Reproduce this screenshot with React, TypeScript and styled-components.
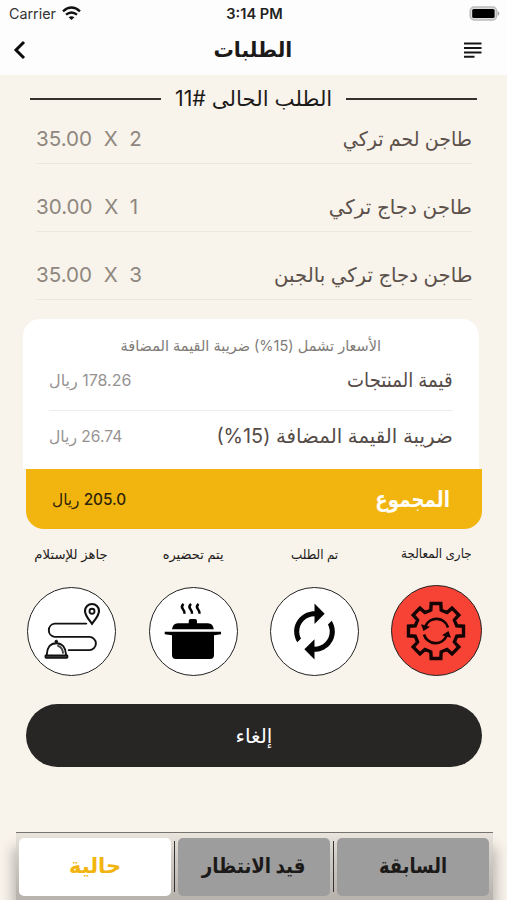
import React from "react";
import styled, { createGlobalStyle } from "styled-components";

const Global = createGlobalStyle`
  *{box-sizing:border-box}
  body{margin:0;background:#f8f3eb}
`;
const Page = styled.div`
  width:507px;height:900px;overflow:hidden;display:flex;flex-direction:column;
  background:#f8f3eb;color:#111;font-family:Inter,"DejaVu Sans",sans-serif;
`;
const Top = styled.header`height:75px;background:#fefdfd;flex:none;`;
const Status = styled.div`
  height:27px;display:grid;grid-template-columns:1fr auto 1fr;align-items:center;
  padding:0 7px 0 9px;font-size:14.3px;
`;
const Carrier = styled.div`display:flex;align-items:center;gap:6px;color:#333;`;
const Clock = styled.div`font-weight:600;font-size:14.6px;color:#222;`;
const BatteryBox = styled.div`display:flex;justify-content:flex-end;`;
const Nav = styled.div`
  height:46px;display:grid;grid-template-columns:40px 1fr 40px;align-items:center;padding:0 14px 0 12px;
`;
const NavEnd = styled.div`display:flex;justify-content:flex-end;padding-right:11px;`;

const Label = styled.span<{ $size: number; $color?: string; $weight?: number; $lift?: number; $stretch?: number; $origin?: string }>`
  display:inline-block;direction:rtl;white-space:nowrap;line-height:1;
  font-size:${p => p.$size}px;color:${p => p.$color || "#1c1a19"};
  font-weight:${p => p.$weight || 400};
  margin-bottom:${p => (p.$lift || 0) * 2}px;
  transform:scaleX(${p => p.$stretch || 1});transform-origin:${p => p.$origin || "center"};
`;
const NavTitle = styled.div`text-align:center;`;

const SectionTitle = styled.div`
  height:48px;flex:none;padding:0 30px;display:grid;grid-template-columns:131px 1fr 131px;align-items:center;text-align:center;
`;
const Rule = styled.div`height:1.5px;background:#35312d;`;
const Items = styled.div`margin:-27px 35px 0 36px;flex:none;`;
const Item = styled.div`
  height:68px;border-bottom:1px solid #ece7e0;display:flex;justify-content:space-between;align-items:flex-end;padding-bottom:14px;
`;
const Price = styled.span`
  font-size:20.6px;line-height:20px;color:#8f877f;white-space:pre;
`;
const Card = styled.section`
  margin:19px 28px 0 23px;height:150px;flex:none;background:#fff;border-radius:17px 17px 0 0;padding:16px 26px 0;
`;
const Note = styled.div`height:20px;text-align:center;`;
const Line = styled.div<{ $last?: boolean }>`
  height:56px;display:flex;justify-content:space-between;align-items:center;padding-bottom:${p => (p.$last ? 6 : 5)}px;
  border-bottom:${p => (p.$last ? 0 : 1)}px solid #efedeb;
`;
const Total = styled.div`
  margin:0 25px 0 26px;height:60px;flex:none;background:#f2b50f;border-radius:0 0 18px 18px;
  padding:0 32px 1px 26px;display:flex;align-items:center;justify-content:space-between;
`;
const Steps = styled.div`
  height:147px;flex:none;margin:0 25px 0 26px;display:flex;justify-content:space-between;
`;
const Step = styled.div<{ $active?: boolean }>`
  width:91px;display:flex;flex-direction:column;align-items:center;justify-content:flex-end;
  padding-bottom:${p => (p.$active ? 0 : 0.5)}px;
`;
const StepName = styled.div<{ $active?: boolean }>`
  height:20px;margin-bottom:22px;display:flex;align-items:center;justify-content:center;
`;
const Disc = styled.div<{ $active?: boolean }>`
  width:${p => (p.$active ? 91 : 89)}px;height:${p => (p.$active ? 91 : 89)}px;flex:none;border-radius:50%;
  border:1.3px solid #222;background:${p => (p.$active ? "#f74336" : "#fff")};overflow:hidden;
  display:flex;align-items:center;justify-content:center;
  svg{flex:none;display:block}
`;
const Cancel = styled.button`
  margin:28px 25px 0 26px;height:63px;flex:none;border:0;border-radius:32px;background:#272625;font-family:inherit;
`;
const Bottom = styled.nav`
  margin:65px 14px 0 16px;height:70px;flex:none;border-top:1.5px solid #77736e;
  background:linear-gradient(#e9e4dc,#d0cbc4 35%,#b9b5ae 90%);
  box-shadow:0 18px 12px 3px #b9b5ae;display:flex;align-items:flex-start;padding:5px 4px 0 3px;
`;
const Tab = styled.div<{ $active?: boolean }>`
  width:152px;height:58px;border-radius:5px;background:${p => (p.$active ? "#fff" : "#9d9d9d")};
  display:flex;align-items:center;justify-content:center;padding-bottom:3px;
`;
const Divider = styled.div`width:1.5px;height:51px;margin:3px 2.75px 0;background:#333;`;

const Wifi = () => (
  <svg width="19" height="15" viewBox="0 0 19 15" fill="none" stroke="#111" strokeWidth="2.4">
    <path d="M1 5.3Q9.5-2.1 18 5.3" /><path d="M4 8.7Q9.5 4.1 15 8.7" />
    <path d="M6.6 11.3Q9.5 9 12.4 11.3L9.5 14Z" fill="#111" stroke="none" />
  </svg>
);
const Battery = () => (
  <svg width="31" height="15" viewBox="0 0 31 15">
    <rect x="1.2" y="1" width="26.4" height="13" rx="4" fill="#ddd" stroke="#bbb" strokeWidth="1.5" />
    <rect x="3.2" y="3" width="22.4" height="9" rx="1.6" fill="#000" />
    <path d="M28.6 5q1.800.6 1.800 2.400t-1.800 2.400z" fill="#aaa" />
  </svg>
);
const Back = () => (
  <svg width="16" height="20" viewBox="0 0 16 20" fill="none" stroke="#0b0b0b" strokeWidth="3"><path d="M12 2L4 10l8 8" /></svg>
);
const Menu = () => (
  <svg width="18" height="16" viewBox="0 0 18 16" stroke="#161616" strokeWidth="2"><path d="M0 1.500h17.500M0 6h17.500M0 10.500h17.500M0 14.700h10.500" /></svg>
);
const Delivery = () => (
  <svg width="90" height="90" viewBox="0 0 90 90" fill="none" stroke="#111" strokeWidth="1.9" strokeLinecap="round">
    <path d="M59.3 37.6H27.7a6.7 6.7 0 0 0 0 13.3H62.3a6.6 6.6 0 0 1 0 13.2H41.7" />
    <path d="M65 37.8C61.5 33 58 29.5 58 25a7 7 0 0 1 14 0C72 29.5 68.5 33 65 37.8Z" strokeWidth="2.1" /><circle cx="65" cy="25.3" r="2.5" />
    <path d="M19.8 68.5C20 61.5 23.5 57.2 29.3 57.2S38.7 61.5 39 68.5" />
    <path d="M31 59.8q4.5 1.5 5 7" strokeWidth="1.9" stroke="#444" />
    <circle cx="29.3" cy="55.500" r="1.300" fill="#111" strokeWidth="1" />
    <rect x="18.300" y="69.300" width="22.300" height="2.700" rx=".7" fill="#333" strokeWidth="1.500" />
  </svg>
);
const Pot = () => (
  <svg width="90" height="90" viewBox="0 0 90 90" fill="#000">
    <path d="M40.7 37.3V35q0-2 2-2H47q2 0 2 2v2.3H60q5 0 5.800 6H24q.8-6 5.800-6Z" />
    <path d="M16.7 45.800H73v2.500l-7 1V69q0 4-4 4H28q-4 0-4-4V49.300l-7.300-1Z" />
    <path d="M35.500 17.800q-2.700 2.500-.8 4.900t1.800 5.100M43 17.800q-2.700 2.500-.8 4.900t1.800 5.100M50.500 17.800q-2.700 2.500-.8 4.900t1.800 5.100" fill="none" stroke="#000" strokeWidth="2.500" />
  </svg>
);
const Renew = () => (
  <svg width="61" height="61" viewBox="0 0 24 24" fill="#050505">
    <path d="M12 6v3l4-4-4-4v3c-4.420 0-8 3.580-8 8 0 1.570.46 3.030 1.240 4.260L6.700 14.800c-.45-.83-.7-1.790-.7-2.800 0-3.310 2.690-6 6-6zm6.760 1.740L17.300 9.200c.44.84.7 1.790.7 2.800 0 3.310-2.690 6-6 6v-3l-4 4 4 4v-3c4.420 0 8-3.580 8-8 0-1.570-.46-3.030-1.240-4.260z" />
  </svg>
);
const gearPoints = Array.from({ length: 8 }, (_, k) => {
  const a = (k * Math.PI) / 4, c = Math.cos(a), s = Math.sin(a);
  return [[-5.2, -20.8], [-4.8, -27.5], [4.8, -27.5], [5.2, -20.8]]
    .map(([x, y]) => `${(x * c - y * s).toFixed(2)},${(x * s + y * c).toFixed(2)}`).join(" ");
}).join(" ");
const Gear = () => (
  <svg width="90" height="90" viewBox="-45 -45 90 90" fill="none" stroke="#140504" strokeWidth="3.4">
    <polygon points={gearPoints} />
    <path d="M-10.5-5A12 12 0 0 1 12-3.500M10.500 5A12 12 0 0 1-12 3.500" strokeWidth="2.700" />
    <path d="M-15-6.800L-6-4.200L-12.500.1ZM15 6.800L6 4.200L12.500-.1Z" fill="#140504" stroke="none" />
  </svg>
);

const items = [
  { name: "طاجن لحم تركي", price: "35.00  X  2", stretch: 0.95 },
  { name: "طاجن دجاج تركي", price: "30.00  X  1", stretch: 0.995 },
  { name: "طاجن دجاج تركي بالجبن", price: "35.00  X  3", stretch: 0.985 },
];
const steps = [
  { name: "جاهز للإستلام", icon: <Delivery />, stretch: 1.02 },
  { name: "يتم تحضيره", icon: <Pot />, stretch: 1 },
  { name: "تم الطلب", icon: <Renew />, stretch: 0.92 },
  { name: "جارى المعالجة", icon: <Gear />, stretch: 0.92, active: true },
];

export default function App() {
  return (
    <><Global /><Page>
      <Top>
        <Status>
          <Carrier>Carrier <Wifi /></Carrier><Clock>3:14 PM</Clock><BatteryBox><Battery /></BatteryBox>
        </Status>
        <Nav>
          <Back /><NavTitle><Label $size={21} $weight={700} $stretch={0.965} $lift={1}>الطلبات</Label></NavTitle><NavEnd><Menu /></NavEnd>
        </Nav>
      </Top>
      <SectionTitle><Rule /><span><Label $size={21} $stretch={1.012}>الطلب الحالى #11</Label></span><Rule /></SectionTitle>
      <Items>
        {items.map(i => (
          <Item key={i.name}><Price>{i.price}</Price><Label $size={20} $color="#5b504a" $stretch={i.stretch} $origin="right">{i.name}</Label></Item>
        ))}
      </Items>
      <Card>
        <Note><Label $size={15} $color="#807b78" $stretch={0.967}>الأسعار تشمل (15%) ضريبة القيمة المضافة</Label></Note>
        <Line>
          <Label $size={16} $color="#969291">178.26 ريال</Label>
          <Label $size={20} $color="#554b47" $stretch={0.905} $origin="right">قيمة المنتجات</Label>
        </Line>
        <Line $last>
          <Label $size={16} $color="#969291" $stretch={0.975} $origin="left">26.74 ريال</Label>
          <Label $size={20} $color="#554b47" $stretch={0.99} $origin="right">ضريبة القيمة المضافة (15%)</Label>
        </Line>
      </Card>
      <Total>
        <Label $size={16} $weight={500} $color="#2f2408" $stretch={0.96} $origin="left">205.0 ريال</Label>
        <Label $size={22} $weight={700} $color="#fffdf5" $stretch={0.83} $origin="right">المجموع</Label>
      </Total>
      <Steps>
        {steps.map(s => (
          <Step key={s.name} $active={s.active}>
            <StepName><Label $size={13} $stretch={s.stretch}>{s.name}</Label></StepName>
            <Disc $active={s.active}>{s.icon}</Disc>
          </Step>
        ))}
      </Steps>
      <Cancel><Label $size={20} $color="#fff">إلغاء</Label></Cancel>
      <Bottom>
        <Tab $active><Label $size={21} $weight={700} $color="#f2b50f">حالية</Label></Tab><Divider />
        <Tab><Label $size={21} $weight={700} $stretch={0.87}>قيد الانتظار</Label></Tab><Divider />
        <Tab><Label $size={21} $weight={700} $stretch={0.85}>السابقة</Label></Tab>
      </Bottom>
    </Page></>
  );
}
